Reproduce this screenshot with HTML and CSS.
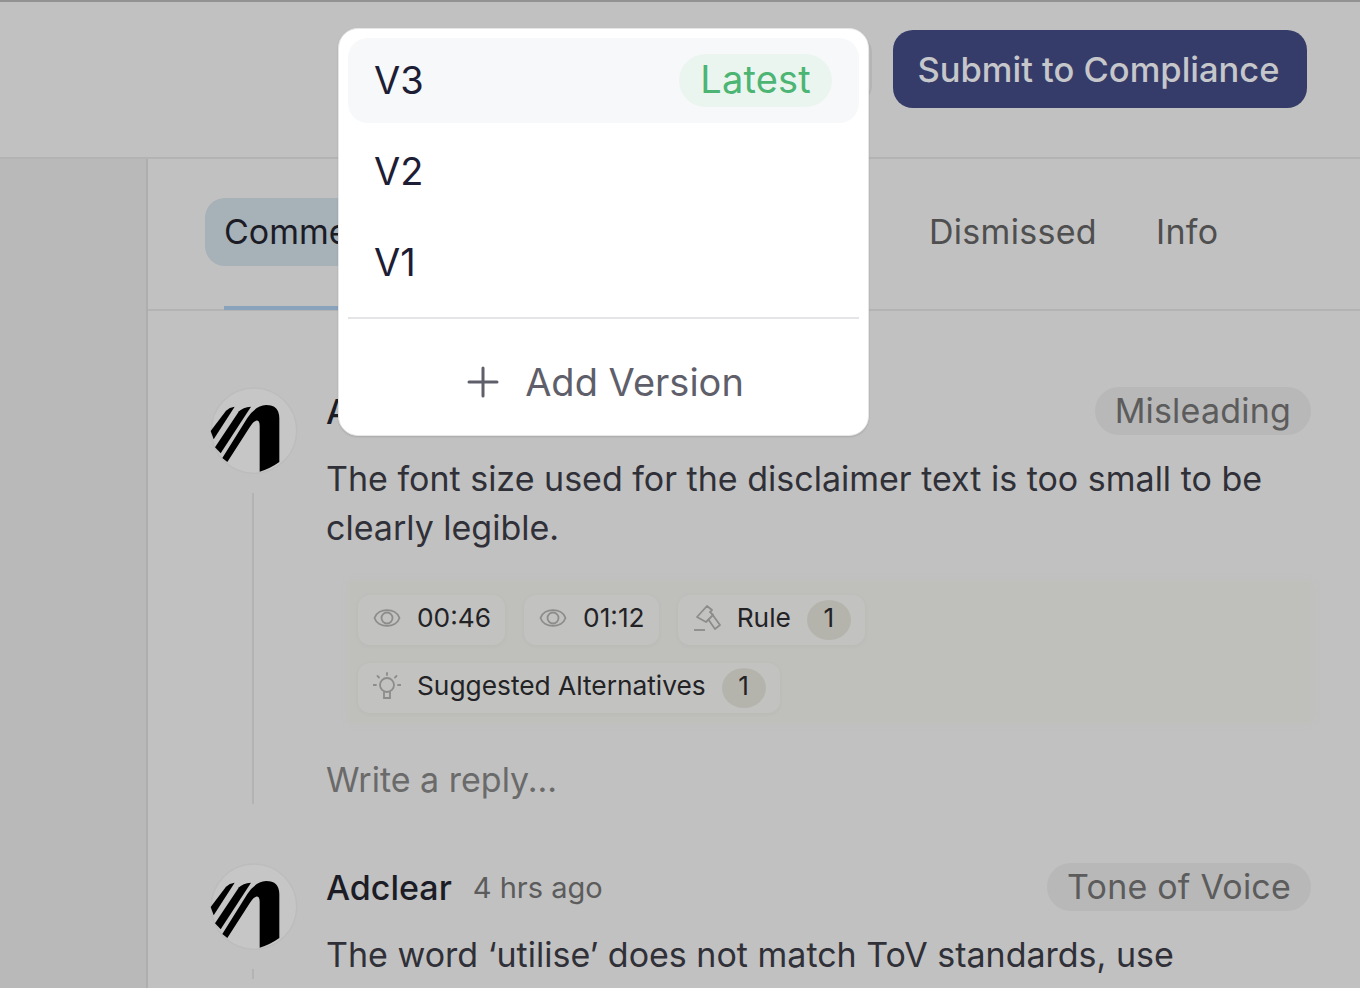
FILE: index.html
```html
<!DOCTYPE html>
<html lang="en">
<head>
    <meta charset="UTF-8">
    <title>Adclear review</title>
    <link rel="stylesheet" href="styles.css">
</head>
<body>
    <!-- Top bar -->
    <header class="topbar">
        <button class="version-btn">V3</button>
        <button class="submit-btn">Submit to Compliance</button>
    </header>

    <div class="layout">
        <aside class="sidebar"></aside>

        <main class="panel">
            <nav class="tabs">
                <a class="tab tab-active">Comments</a>
                <div class="tabs-right">
                    <a class="tab">Dismissed</a>
                    <a class="tab">Info</a>
                </div>
            </nav>

            <!-- Comments -->
            <section class="comments">
                <article class="comment">
                    <div class="rail">
                        <svg class="avatar" viewBox="54 51 270 270">
                            <circle cx="192" cy="182" r="128" fill="#c6c6c6" stroke="#bcbcbc" stroke-width="4"/>
                            <path d="M62 183 L108 122 Q118 112 134 110 L71 208 Z" fill="#000"/>
                            <path d="M75 232 L147 124 Q158 112 183 110 L92 250 Z" fill="#000"/>
                            <path d="M97 264 L172 144 Q195 108 228 105 Q268 105 268 145 L268 276 Q240 296 209 305 L209 168 Q209 150 198 152 Q190 154 180 170 L112 276 Z" fill="#000"/>
                        </svg>
                        <div class="thread-line"></div>
                    </div>
                    <div class="comment-body">
                        <div class="comment-head">
                            <span class="author">Adclear</span>
                            <span class="time">2 hrs ago</span>
                            <span class="tag">Misleading</span>
                        </div>
                        <p class="comment-text">The font size used for the disclaimer text is too small to be clearly legible.</p>
                        <div class="chips">
                            <div class="chip">
                                <svg class="chip-icon" viewBox="0 0 28 28" fill="none" stroke="#8c8c8c" stroke-width="1.8">
                                    <path d="M1.5 14 C5 3.5 23 3.5 26.5 14 C23 24.5 5 24.5 1.5 14 Z"/>
                                    <circle cx="14" cy="14" r="5.5"/>
                                </svg>
                                <span>00:46</span>
                            </div>
                            <div class="chip">
                                <svg class="chip-icon" viewBox="0 0 28 28" fill="none" stroke="#8c8c8c" stroke-width="1.8">
                                    <path d="M1.5 14 C5 3.5 23 3.5 26.5 14 C23 24.5 5 24.5 1.5 14 Z"/>
                                    <circle cx="14" cy="14" r="5.5"/>
                                </svg>
                                <span>01:12</span>
                            </div>
                            <div class="chip">
                                <svg class="chip-icon" viewBox="0 0 28 28" fill="none" stroke="#8c8c8c" stroke-width="1.8" stroke-linejoin="round">
                                    <path d="M4 13 L14 2 L19 6 L17 8 L20 11 L13 18 Z"/>
                                    <path d="M15 15 L22 25 L27 21 L19 10"/>
                                    <path d="M1 26 L12 26"/>
                                </svg>
                                <span>Rule</span>
                                <span class="count">1</span>
                            </div>
                            <div class="chip">
                                <svg class="chip-icon" viewBox="0 0 28 28" fill="none" stroke="#8c8c8c" stroke-width="1.8">
                                    <circle cx="14" cy="13" r="7"/>
                                    <path d="M11 20 L11 26 L17 26 L17 20"/>
                                    <path d="M14 1 L14 3 M4.5 4 L6 5.5 M23.5 4 L22 5.5 M0.5 13 L3 13 M25 13 L27.5 13" stroke-linecap="round"/>
                                </svg>
                                <span>Suggested Alternatives</span>
                                <span class="count">1</span>
                            </div>
                        </div>
                        <div class="reply">Write a reply...</div>
                    </div>
                </article>

                <article class="comment">
                    <div class="rail">
                        <svg class="avatar" viewBox="54 51 270 270">
                            <circle cx="192" cy="182" r="128" fill="#c6c6c6" stroke="#bcbcbc" stroke-width="4"/>
                            <path d="M62 183 L108 122 Q118 112 134 110 L71 208 Z" fill="#000"/>
                            <path d="M75 232 L147 124 Q158 112 183 110 L92 250 Z" fill="#000"/>
                            <path d="M97 264 L172 144 Q195 108 228 105 Q268 105 268 145 L268 276 Q240 296 209 305 L209 168 Q209 150 198 152 Q190 154 180 170 L112 276 Z" fill="#000"/>
                        </svg>
                        <div class="thread-line"></div>
                    </div>
                    <div class="comment-body">
                        <div class="comment-head">
                            <span class="author">Adclear</span>
                            <span class="time">4 hrs ago</span>
                            <span class="tag">Tone of Voice</span>
                        </div>
                        <p class="comment-text">The word ‘utilise’ does not match ToV standards, use</p>
                    </div>
                </article>
            </section>
        </main>
    </div>

    <!-- Version menu -->
    <div class="version-menu">
        <div class="version-item version-current">
            <span>V3</span>
            <span class="latest">Latest</span>
        </div>
        <div class="version-item"><span>V2</span></div>
        <div class="version-item"><span>V1</span></div>
        <div class="menu-line"></div>
        <div class="add-version">
            <svg class="plus" viewBox="0 0 32 32" fill="none" stroke="#5f5f6b" stroke-width="3" stroke-linecap="round">
                <path d="M16 2 L16 30 M2 16 L30 16"/>
            </svg>
            <span>Add Version</span>
        </div>
    </div>
</body>
</html>
```

FILE: styles.css
```css
* {
    box-sizing: border-box;
}

html,
body {
    height: 100%;
}

body {
    margin: 0;
    height: 988px;
    overflow: hidden;
    background-color: #c1c1c1;
    font-family: "Inter", "Liberation Sans", sans-serif;
    color: #1b1c26;
    border-top: 2px solid #929292;
}

/* Top bar */
.topbar {
    height: 157px;
    display: flex;
    justify-content: flex-end;
    align-items: flex-start;
    gap: 21px;
    padding: 28px 53px 0 0;
    border-bottom: 2px solid #b3b3b3;
}

.version-btn {
    width: 200px;
    height: 66px;
    margin-top: 6px;
    background: none;
    border: 2px solid #b5b5b5;
    border-radius: 16px;
    font: inherit;
}

.submit-btn {
    width: 414px;
    height: 78px;
    padding: 0 3px 0 0;
    background-color: #363c69;
    color: #c6c7ca;
    border: none;
    border-radius: 20px;
    font-family: inherit;
    font-size: 34.5px;
    font-weight: 500;
}

.layout {
    display: flex;
    height: 829px;
}

.sidebar {
    width: 148px;
    flex-shrink: 0;
    background-color: #b9b9b9;
    border-right: 2px solid #aeaeae;
}

.panel {
    flex: 1;
    min-width: 0;
}

/* Tabs */
.tabs {
    height: 152px;
    display: flex;
    align-items: flex-start;
    padding: 39px 0 0 57px;
    border-bottom: 2px solid #b3b3b3;
    position: relative;
}

.tab {
    font-size: 34px;
    line-height: 68px;
    color: #4f4f4f;
    letter-spacing: 0.3px;
}

.tab-active {
    width: 200px;
    height: 68px;
    padding-left: 19px;
    color: #1b1c26;
    background-color: #a7b1b8;
    border-radius: 20px;
    position: relative;
    letter-spacing: 0;
}

/* underline sits over the tab bar border */
.tab-active::after {
    content: "";
    position: absolute;
    left: 19px;
    right: 20px;
    top: 108px;
    height: 4px;
    background-color: #8aa3bd;
}

.tabs-right {
    display: flex;
    gap: 59px;
    margin-left: 524px;
}

/* Comments */
.comments {
    padding: 76px 49px 0 60px;
}

.comment {
    display: flex;
    gap: 28px;
    margin-bottom: 59px;
}

.rail {
    width: 90px;
    flex-shrink: 0;
    display: flex;
    flex-direction: column;
    align-items: center;
}

.avatar {
    width: 90px;
    height: 90px;
    display: block;
}

.thread-line {
    width: 2px;
    flex: 1;
    margin-top: 16px;
    background-color: #b3b3b3;
}

.comment-body {
    flex: 1;
    min-width: 0;
}

.comment-head {
    display: flex;
    align-items: center;
    height: 48px;
}

.author {
    font-size: 34px;
    font-weight: 500;
    margin-right: 21px;
}

.time {
    font-size: 29px;
    color: #5c5c5c;
}

.tag {
    margin-left: auto;
    height: 48px;
    line-height: 48px;
    padding: 0 20px;
    font-size: 34px;
    letter-spacing: 0.2px;
    color: #5c5c5c;
    background-color: #b8b8b8;
    border-radius: 24px;
}

.comment-text {
    margin: 19px 0 0;
    font-size: 34px;
    line-height: 49px;
    color: #303038;
}

.chips {
    display: flex;
    flex-wrap: wrap;
    align-content: flex-start;
    gap: 18px 19px;
    margin: 30px 0 0 24px;
    padding: 13px 300px 0 8px;
    height: 140px;
    background-color: #bfbfbb;
    box-shadow: 0 0 8px #bfbfbb;
}

.chip {
    display: flex;
    align-items: center;
    gap: 16px;
    height: 50px;
    padding: 0 14px 5px 15px;
    font-size: 26.3px;
    color: #232326;
    background-color: #c2c2c0;
    border-radius: 12px;
    box-shadow: 0 1px 5px rgba(0, 0, 0, 0.04);
}

.chip-icon {
    width: 28px;
    height: 28px;
}

.count {
    width: 44px;
    height: 40px;
    margin-top: 5px;
    line-height: 36px;
    text-align: center;
    background-color: #b5b4ac;
    border-radius: 50%;
}

.reply {
    margin-top: 33px;
    font-size: 34px;
    line-height: 49px;
    color: #6a6a6a;
}

/* Version menu */
.version-menu {
    position: absolute;
    left: 338px;
    top: 28px;
    width: 531px;
    height: 408px;
    padding: 9px;
    background-color: #fff;
    border: 1px solid #e6e6e6;
    border-radius: 20px;
    box-shadow: 0 1px 2px rgba(0, 0, 0, 0.12);
}

.version-item {
    height: 91px;
    display: flex;
    align-items: center;
    justify-content: space-between;
    padding: 0 27px 2px 26px;
    font-size: 38px;
    color: #1d1d35;
}

.version-current {
    height: 85px;
    margin-bottom: 3px;
    background-color: #f7f8f9;
    border-radius: 20px;
}

.latest {
    height: 53px;
    margin-top: 2px;
    line-height: 51px;
    padding: 0 21px;
    letter-spacing: 0.2px;
    color: #4cb573;
    background-color: #ebf5ef;
    border-radius: 27px;
}

.menu-line {
    height: 2px;
    margin-top: 9px;
    background-color: #e5e5e7;
}

.add-version {
    display: flex;
    align-items: center;
    justify-content: center;
    gap: 26px;
    margin-top: 40px;
    padding-left: 4px;
    font-size: 38px;
    color: #5f5f6b;
}

.plus {
    width: 32px;
    height: 32px;
}
```
